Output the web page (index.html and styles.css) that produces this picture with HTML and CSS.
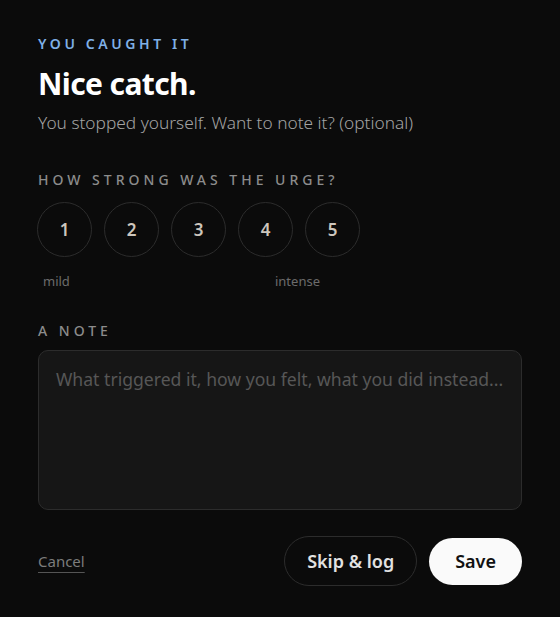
FILE: index.html
```html
<!DOCTYPE html>
<html lang="en">
<head>
  <meta charset="UTF-8" />
  <title>You caught it</title>
  <meta name="viewport" content="width=device-width, initial-scale=1" />
  <link rel="stylesheet" href="styles.css">
</head>
<body>
  <div class="sheet">
    <div class="eyebrow">You caught it</div>
    <h1>Nice catch.</h1>
    <p class="sub">You stopped yourself. Want to note it? (optional)</p>

    <div class="label">How strong was the urge?</div>
    <div class="scale">
      <button class="dot">1</button>
      <button class="dot">2</button>
      <button class="dot">3</button>
      <button class="dot">4</button>
      <button class="dot">5</button>
    </div>
    <div class="scale-hints">
      <span>mild</span>
      <span>intense</span>
    </div>

    <div class="label note-label">A note</div>
    <textarea class="note" placeholder="What triggered it, how you felt, what you did instead..."></textarea>

    <div class="actions">
      <a href="#" class="cancel">Cancel</a>
      <div class="btns">
        <button class="btn btn-ghost">Skip &amp; log</button>
        <button class="btn btn-save">Save</button>
      </div>
    </div>
  </div>
</body>
</html>
```

FILE: styles.css
```css
body {
  font-family: 'Noto Sans', 'Open Sans', sans-serif;
  background: #0b0b0b;
  color: #fff;
  margin: 0;
}
.sheet {
  padding: 34px 38px 30px 38px;
}
.eyebrow {
  color: #7fb0e6;
  font-size: 14px;
  font-weight: 600;
  letter-spacing: 3.6px;
  text-transform: uppercase;
  line-height: 20px;
}
h1 {
  font-size: 30px;
  font-weight: 700;
  margin: 10px 0 0 0;
  line-height: 40px;
  letter-spacing: -0.6px;
}
.sub {
  color: #a3a3a3;
  font-size: 17.3px;
  font-weight: 300;
  margin: 8px 0 0 0;
  line-height: 22px;
}
.label {
  color: #8c8c8c;
  font-size: 14px;
  font-weight: 500;
  letter-spacing: 4px;
  text-transform: uppercase;
  line-height: 20px;
  margin-top: 36px;
}
.scale {
  display: flex;
  gap: 12px;
  margin-top: 12px;
  margin-left: -1px;
}
.dot {
  width: 55px;
  height: 55px;
  border-radius: 50%;
  border: 1px solid #2c2c2c;
  background: transparent;
  color: #cdc6bd;
  font-family: inherit;
  font-size: 17px;
  font-weight: 600;
  padding: 0;
  cursor: pointer;
}
.scale-hints {
  display: flex;
  justify-content: space-between;
  width: 277px;
  padding-left: 5px;
  margin-top: 15px;
  color: #6b6b6b;
  font-size: 13px;
  line-height: 18px;
}
.note-label {
  margin-top: 31px;
}
.note {
  display: block;
  box-sizing: border-box;
  width: 100%;
  height: 160px;
  margin-top: 9px;
  background: #161616;
  border: 1px solid #2c2c2c;
  border-radius: 10px;
  color: #ddd;
  font-family: inherit;
  font-size: 17.6px;
  padding: 16px 17px;
  resize: none;
  outline: none;
}
.note::placeholder {
  color: #575757;
}
.actions {
  display: flex;
  align-items: center;
  justify-content: space-between;
  margin-top: 26px;
}
.cancel {
  color: #7c7c7c;
  font-size: 15px;
  text-decoration: underline;
  text-underline-offset: 5px;
  text-decoration-color: #555;
}
.btns {
  display: flex;
  align-items: center;
  gap: 12px;
}
.btn {
  font-family: inherit;
  font-size: 18px;
  font-weight: 600;
  border-radius: 999px;
  cursor: pointer;
}
.btn-ghost {
  background: transparent;
  color: #e2e2e2;
  border: 1px solid #2c2c2c;
  height: 50px;
  padding: 0 22px;
}
.btn-save {
  background: #fafafa;
  color: #111;
  border: none;
  height: 47px;
  padding: 0 26px;
}
```
